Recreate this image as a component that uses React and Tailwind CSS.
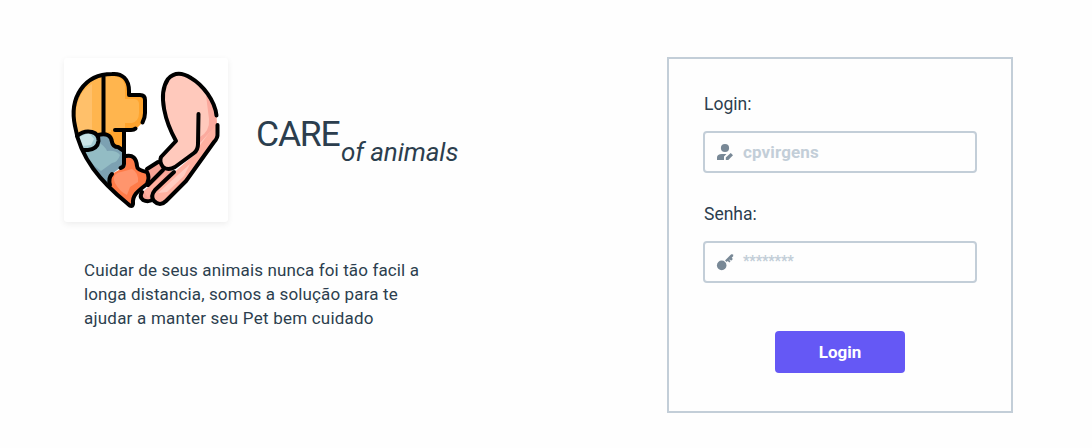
function HeartLogo() {
  return (
    <svg className="size-full" viewBox="64 58 164 164" fill="none" aria-hidden="true">
      <path d="M76 136C70 105 82 79 103 76C120 70 129 80 129 95H141Q145 95 145 100V113Q145 119 141 124L135 130H125V153L98 137Z" fill="#ffa42d" />
      <path d="M105 76H111V132H105ZM111 76Q124 76 125 87V99H135Q139 100 139 104V113Q139 121 132 123H125V130H111Z" fill="#ffb54e" />
      <path d="M76 136C71 105 82 80 102 77V135Z" fill="#ffb54e" />
      <path d="M77 133C73 105 79 92 92 84V131Z" fill="#ffc06a" />
      <path d="M77 136L100 134Q112 134 113 146L125 150V164L112 174L109 185Q88 167 77 136Z" fill="#7ca1b2" />
      <path d="M83 150Q96 149 98 142Q105 146 107 151Q116 150 120 155Q118 162 112 163L101 171Q88 162 83 150Z" fill="#93bcc4" />
      <path d="M77 136Q89 127 98 136Q100 148 83 150Q77 144 77 136Z" fill="#a4ccd2" />
      <path d="M79 137L89 133L94 139L91 145L82 146Z" fill="#c9e4e6" />
      <path d="M109 185L112 174L126 166V155Q137 155 137 167Q150 171 149 182Q135 190 132 206Q120 198 109 185Z" fill="#ff7b48" />
      <path d="M115 183Q111 174 121 172L132 169Q139 173 138 182L130 187L127 195Q120 192 115 183Z" fill="#ff956d" />
      <path d="M141 194L153 182L147 180L149 167L160 159L172 171L153 192L151 201Q142 203 141 194Z" fill="#f7a496" />
      <path d="M144 191L168 171L155 188L148 198Z" fill="#ffb0a0" />
      <path d="M217 125V139L185 181L166 200Q161 205 156 202Q150 198 154 190L195 154L208 95Z" fill="#ffb0a0" />
      <path d="M158 193L190 164L184 176L167 192Z" fill="#ffcbc0" />
      <path d="M176 141C166 120 160 96 166 82Q174 68 190 77Q218 98 217 122L198 148L175 167Q162 170 160 158Z" fill="#ffc9bc" />
      <path d="M206 95Q217 111 217 124L200 143V137Q210 131 209 119Z" fill="#fbaa9e" />
      <g stroke="#000" strokeWidth="4" strokeLinecap="round" strokeLinejoin="round">
        <path d="M142.500 122.500Q145 118 145 113V100Q145 95 140 95H129V91C129 79 122 73 112 74C84 74 69 98 75 126C80 158 101 182 128 204Q132 208 133 204C132 195 138 191 147 184Q150 177 147 172Q137 170 137 166Q136 154 126 156" />
        <path d="M103.500 77V133M115 130H131Q134 130 135.500 128.500M124 131V164Q124 167 120.500 168" />
        <path d="M77 136Q84 130 92 132Q99 134 98.500 141Q97.500 149 88 150H83M98 135Q111 132 112 142Q113 147 118 147L124 151M112 174Q108 178 110 185" />
        <path d="M216.500 115.500C215 101 203 85 191 78Q177 69 168 79C157 95 166 123 176 141L161 157Q159 162 163 167Q168 171 175 167L194 153Q198 150 198 144L198.500 114" />
        <path d="M217.500 125V133Q218 138 214 142L186 181L166 201Q160 207 154 201Q150 196 155 190L174 172" />
        <path d="M147 169L158 162M148 185L163 170M142 192Q139 197 143 200Q147 202 151 200.500" />
      </g>
    </svg>
  );
}

function UserEditIcon() {
  return (
    <svg className="ml-[11px] size-[18px] shrink-0 fill-[#788896]" viewBox="0 0 18 18">
      <circle cx="9" cy="5" r="4.100" />
      <path d="M1 17V14.500Q1 11 6 11H10.500L8 13.500V17Z" />
      <path d="M9.800 14.600L14.700 9.900L17 12.200L12.300 17H9.800Z" />
    </svg>
  );
}

function KeyIcon() {
  return (
    <svg className="ml-[11px] size-[18px] shrink-0 fill-[#788896]" viewBox="0 0 18 18">
      <circle cx="5.700" cy="12.400" r="4.800" />
      <path d="M9 7.500L15.200 1.200L17.200 1.500V3.200L15.700 4.700L16.900 5.900L15.100 7.700L13.900 6.500L13.300 7.100L14.500 8.300L13.400 9.400L11.700 7.900L10.700 9Z" />
    </svg>
  );
}

export default function App() {
  return (
    <main className="flex h-[448px] w-[1092px] items-start justify-between overflow-hidden bg-[#fefefe] pt-[57px] pr-[79px] pl-16 font-['Roboto',sans-serif] text-[#2c3e4e]">
      <section className="w-[420px] pt-px">
        <header className="flex">
          <div className="size-[164px] shrink-0 rounded-[3px] bg-white shadow-[0_2px_6px_rgba(0,0,0,0.07)]">
            <HeartLogo />
          </div>
          <h1 className="flex pt-[54px] pl-7 font-normal whitespace-nowrap">
            <span className="w-[85px] text-[35.500px] leading-[44px] tracking-[-1.200px]">CARE</span>
            <em className="mt-[24px] text-[26px] leading-8 tracking-[-0.100px]">of animals</em>
          </h1>
        </header>
        <p className="mt-9 ml-5 text-[17px] leading-6 whitespace-nowrap">
          <span className="block tracking-[0.130px]">Cuidar de seus animais nunca foi tão facil a</span>
          <span className="block tracking-[0.130px]">longa distancia, somos a solução para te</span>
          <span className="block tracking-[0.220px]">ajudar a manter seu Pet bem cuidado</span>
        </p>
      </section>

      <section className="flex h-[356px] w-[346px] flex-col border-2 border-[#c3ced8] px-[34px] pt-[33px]">
        <label className="flex h-6 items-center pl-px text-[17.500px]">Login:</label>
        <div className="mt-[15px] flex h-[42px] items-center rounded-[4px] border-2 border-[#c3ced8]">
          <UserEditIcon />
          <span className="ml-[9px] text-[17px] leading-6 font-bold tracking-[0.130px] text-[#c3ced8]">cpvirgens</span>
        </div>
        <label className="mt-[29px] flex h-6 items-center pl-px text-[17.500px]">Senha:</label>
        <div className="mt-[15px] flex h-[42px] items-center rounded-[4px] border-2 border-[#c3ced8]">
          <KeyIcon />
          <span className="ml-[9px] pb-0.5 text-[14px] leading-6 font-black tracking-[-0.200px] text-[#c3ced8]">********</span>
        </div>
        <button className="mt-12 h-[42px] w-[130px] self-center rounded-[4px] bg-[#6558f5] pt-px text-[17px] font-bold text-white">Login</button>
      </section>
    </main>
  );
}
